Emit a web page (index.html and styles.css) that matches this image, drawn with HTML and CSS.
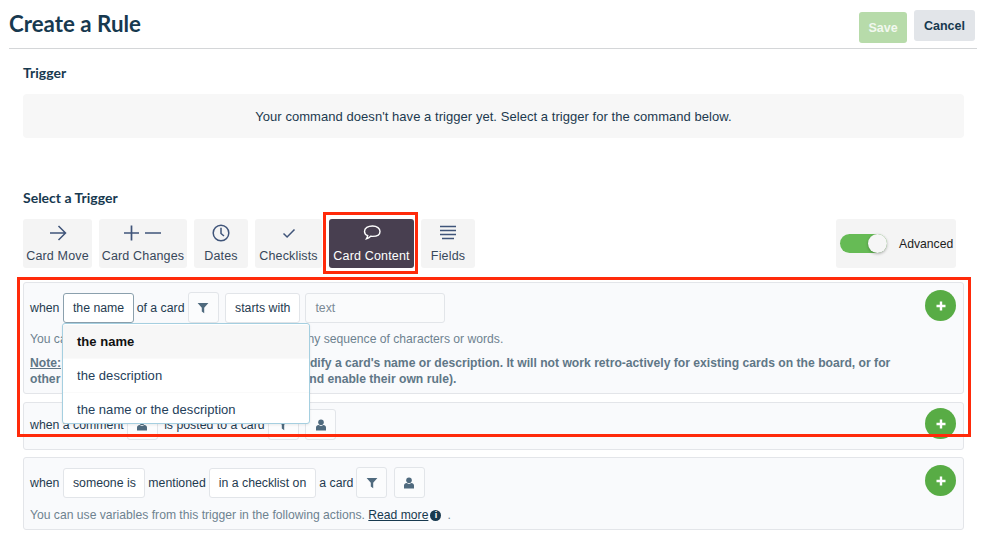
FILE: index.html
```html
<!DOCTYPE html>
<html lang="en">
<head>
<meta charset="utf-8">
<title>Create a Rule</title>
<link rel="stylesheet" href="styles.css">
</head>
<body>
<svg class="defs" aria-hidden="true">
  <symbol id="i-filter" viewBox="0 0 12 12"><path d="M.6 1h10.800L7.200 5.800v5.400L4.800 9.600V5.800z" fill="currentColor"/></symbol>
  <symbol id="i-user" viewBox="0 0 12 12"><circle cx="6" cy="3.200" r="2.800" fill="currentColor"/><path d="M1 11.500V8.600C1 7 2.200 6.100 3.600 6.100c.7.500 1.500.8 2.400.8s1.700-.3 2.400-.8C9.800 6.100 11 7 11 8.600v2.900z" fill="currentColor"/></symbol>
  <symbol id="i-plus" viewBox="0 0 12 12"><path d="M6 1.500v9M1.500 6h9" stroke="currentColor" stroke-width="2.400" fill="none"/></symbol>
</svg>
<header class="top">
  <h1 class="title">Create a Rule</h1>
  <div class="actions">
    <button class="btn save">Save</button>
    <button class="btn cancel">Cancel</button>
  </div>
</header>
<main class="page">
  <h2 class="heading">Trigger</h2>
  <div class="notice">Your command doesn't have a trigger yet. Select a trigger for the command below.</div>
  <h2 class="heading select-heading">Select a Trigger</h2>
  <div class="tabs">
    <div class="tab move">
      <svg class="tab-icon" viewBox="0 0 20 20"><path d="M2 10h15.500M10.500 3l7 7-7 7" fill="none" stroke="currentColor" stroke-width="1.500"/></svg>
      <span>Card Move</span>
    </div>
    <div class="tab changes">
      <svg class="tab-icon wide" viewBox="0 0 40 20"><path d="M1 10h15M8.500 2.500v15M22 10h16" fill="none" stroke="currentColor" stroke-width="1.700"/></svg>
      <span>Card Changes</span>
    </div>
    <div class="tab dates">
      <svg class="tab-icon" viewBox="0 0 20 20"><circle cx="10" cy="10" r="7.800" fill="none" stroke="currentColor" stroke-width="1.500"/><path d="M10 4.800V10.500l3 2.500" fill="none" stroke="currentColor" stroke-width="1.500"/></svg>
      <span>Dates</span>
    </div>
    <div class="tab checklists">
      <svg class="tab-icon" viewBox="0 0 20 20"><path d="M4.500 10.500l3.600 3.500 7.400-7.500" fill="none" stroke="currentColor" stroke-width="1.500"/></svg>
      <span>Checklists</span>
    </div>
    <div class="tab content active">
      <svg class="tab-icon" viewBox="0 0 20 20"><path d="M10.500 3C6 3 2.500 5 2.500 8.400c0 2 1.300 3.500 3.200 4.300-.2 1.200-.7 2.200-1.300 3.100 1.700-.3 3.200-1.300 4.300-2.500 .6.100 1.200.1 1.800.1 4.500 0 7.500-2 7.500-5S15 3 10.500 3z" fill="none" stroke="currentColor" stroke-width="1.400"/></svg>
      <span>Card Content</span>
    </div>
    <div class="tab fields">
      <svg class="tab-icon" viewBox="0 0 20 20"><path d="M2 3.500h16M2 7.500h16M2 11.500h16M4 15.500h12" fill="none" stroke="currentColor" stroke-width="1.500"/></svg>
      <span>Fields</span>
    </div>
    <div class="advanced">
      <span class="switch"><span class="knob"></span></span>
      <span>Advanced</span>
    </div>
  </div>
  <section class="rule first">
    <div class="row">
      <span class="lead">when</span>
      <span class="pick open">the name</span>
      <span>of a card</span>
      <span class="square"><svg class="glyph"><use href="#i-filter"/></svg></span>
      <span class="pick roomy">starts with</span>
      <span class="input">text</span>
    </div>
    <p class="hint">You can use this trigger with filter text to match on any sequence of characters or words.</p>
    <p class="hint strong"><u>Note:</u> This trigger will only run for users who modify a card's name or description. It will not work retro-actively for existing cards on the board, or for<br>other board members (they will need to copy it and enable their own rule).</p>
    <button class="add"><svg class="plus"><use href="#i-plus"/></svg></button>
    <ul class="menu">
      <li class="selected">the name</li>
      <li>the description</li>
      <li>the name or the description</li>
    </ul>
  </section>
  <section class="rule second">
    <div class="row">
      <span>when a comment</span>
      <span class="square"><svg class="glyph"><use href="#i-user"/></svg></span>
      <span>is posted to a card</span>
      <span class="square"><svg class="glyph"><use href="#i-filter"/></svg></span>
      <span class="square"><svg class="glyph"><use href="#i-user"/></svg></span>
    </div>
    <button class="add"><svg class="plus"><use href="#i-plus"/></svg></button>
  </section>
  <section class="rule third">
    <div class="row">
      <span class="lead">when</span>
      <span class="pick">someone is</span>
      <span>mentioned</span>
      <span class="pick roomy">in a checklist on</span>
      <span>a card</span>
      <span class="square"><svg class="glyph"><use href="#i-filter"/></svg></span>
      <span class="square"><svg class="glyph"><use href="#i-user"/></svg></span>
    </div>
    <p class="hint">You can use variables from this trigger in the following actions. <a class="more">Read more</a><span class="info">i</span><span class="dot">.</span></p>
    <button class="add"><svg class="plus"><use href="#i-plus"/></svg></button>
  </section>
</main>
<div class="mark mark-tab"></div>
<div class="mark mark-rules"></div>
</body>
</html>
```
FILE: styles.css
```css
* { box-sizing: border-box; }
html, body { margin: 0; padding: 0; }
body {
  position: relative;
  width: 999px;
  height: 559px;
  overflow: hidden;
  background: #fff;
  color: #1c3a4f;
  font-family: "Liberation Sans", Arial, sans-serif;
  font-size: 13px;
}
.defs { display: none; }
.top {
  display: flex;
  justify-content: space-between;
  align-items: flex-start;
  height: 49px;
  margin: 0 22px 0 9px;
  border-bottom: 1px solid #d4d6d8;
}
.title {
  margin: 8px 0 0;
  font-family: Lato, sans-serif;
  font-size: 22.300px;
  line-height: 32px;
  font-weight: 700;
  color: #17394f;
}
.actions { display: flex; align-items: flex-start; gap: 7px; padding: 10px 2px 0 0; }
.btn {
  border: 0;
  border-radius: 3px;
  font-family: "Liberation Sans", Arial, sans-serif;
  font-size: 12.500px;
  font-weight: 700;
}
.save { width: 48px; height: 31px; margin-top: 2px; background: #b7dbaa; color: #f2f8ef; }
.cancel { width: 61px; height: 31px; background: #e2e5e9; color: #17394f; }
.page { padding: 0 35px 0 23px; }
.heading {
  margin: 0;
  padding-top: 15px;
  font-family: Lato, sans-serif;
  font-size: 14px;
  line-height: 18px;
  font-weight: 700;
  color: #17394f;
}
.notice {
  height: 44px;
  margin-top: 12px;
  border-radius: 4px;
  background: #f7f7f7;
  text-align: center;
  font-size: 13px;
  line-height: 46px;
  letter-spacing: .05px;
}
.select-heading { padding-top: 51px; }
.tabs { display: flex; gap: 7px; margin-top: 12px; height: 49px; }
.tab, .advanced {
  display: flex;
  flex-direction: column;
  align-items: center;
  height: 49px;
  border-radius: 3px;
  background: #f4f4f4;
  color: #37475a;
  font-size: 12.500px;
  letter-spacing: .16px;
  white-space: nowrap;
}
.tab span { margin-top: 6px; line-height: 15px; }
.tab-icon { width: 20px; height: 20px; margin-top: 4px; color: #3f5479; }
.tab-icon.wide { width: 48px; }
.move { width: 69px; }
.changes { width: 88px; }
.dates { width: 54px; }
.checklists { width: 67px; }
.content { width: 85px; }
.fields { width: 54px; }
.active { background: #483f50; color: #fff; }
.active .tab-icon { color: #fff; }
.advanced {
  flex-direction: row;
  gap: 12px;
  width: 120px;
  margin: 0 8px 0 auto;
  padding-left: 4px;
  color: #1d1d1d;
  font-size: 12.200px;
  letter-spacing: 0;
}
.switch {
  display: flex;
  justify-content: flex-end;
  width: 47px;
  height: 19px;
  border-radius: 10px;
  background: #66bb55;
}
.knob {
  width: 19px;
  height: 19px;
  border-radius: 50%;
  background: #f6f6f6;
  box-shadow: 0 1px 3px rgba(0, 0, 0, .3);
}
.rule {
  position: relative;
  margin-top: 8px;
  padding: 9px 6px 0;
  border: 1px solid #e3e5e9;
  border-radius: 3px;
  background: #f9fafc;
}
.first { height: 112px; margin-top: 14px; }
.second { height: 48px; padding-top: 6px; }
.third { height: 73px; margin-top: 7px; }
.third .hint { margin-top: 9px; }
.row { display: flex; align-items: center; gap: 3px; height: 31px; color: #1f3b50; font-size: 12.300px; white-space: nowrap; }
.lead { margin-right: 1px; }
.pick, .input, .square {
  display: flex;
  align-items: center;
  justify-content: center;
  height: 31px;
  background: #fff;
  border: 1px solid #e2e5e9;
  border-radius: 3px;
  padding: 0 8.500px;
}
.pick { height: 30px; border-width: 1.500px; }
.roomy { padding: 0 9px; }
.open { border-color: #8ba0ad; }
.input { justify-content: flex-start; width: 140px; height: 30px; margin-left: 2px; padding: 0 9px; background: #fafbfc; color: #7a8a96; }
.square { width: 31px; padding: 0; margin-right: 3.500px; color: #4f6a7e; background: #fbfcfd; }
.glyph { width: 12px; height: 12px; }
.hint { margin: 8px 0 0; color: #6e8290; font-size: 12.150px; line-height: 16px; white-space: nowrap; }
.strong { font-weight: 700; color: #5f7787; }
.add {
  position: absolute;
  top: 7px;
  right: 7px;
  display: flex;
  align-items: center;
  justify-content: center;
  width: 31px;
  height: 31px;
  padding: 0;
  border: 0;
  border-radius: 50%;
  background: #58ac45;
  color: #fff;
}
.second .add { top: 5px; }
.plus { width: 12px; height: 12px; }
.menu {
  position: absolute;
  z-index: 2;
  top: 40px;
  left: 38px;
  width: 248px;
  height: 101px;
  margin: 0;
  padding: 1px 0 0;
  overflow: hidden;
  list-style: none;
  background: #fff;
  border: 1px solid #a5cfe0;
  border-radius: 3px;
  box-shadow: 0 1px 3px rgba(0, 0, 0, .08);
  color: #24405a;
  letter-spacing: .04px;
}
.menu li { height: 34px; padding-left: 14px; line-height: 34px; border-bottom: 1px solid #fafafa; }
.menu .selected { background: #f7f7f7; color: #101010; font-weight: 700; }
.more { color: #17394f; text-decoration: underline; }
.info {
  display: inline-block;
  width: 11px;
  height: 11px;
  margin-left: 2px;
  border-radius: 50%;
  background: #17394f;
  color: #fff;
  font-size: 9px;
  line-height: 11px;
  font-weight: 700;
  text-align: center;
  vertical-align: 1px;
}
.dot { margin-left: 6px; }
.mark { position: absolute; z-index: 5; border: 3px solid #ff2a0a; pointer-events: none; }
.mark-tab { left: 323px; top: 212px; width: 95px; height: 62px; }
.mark-rules { left: 17px; top: 277px; width: 954px; height: 160px; }
```
